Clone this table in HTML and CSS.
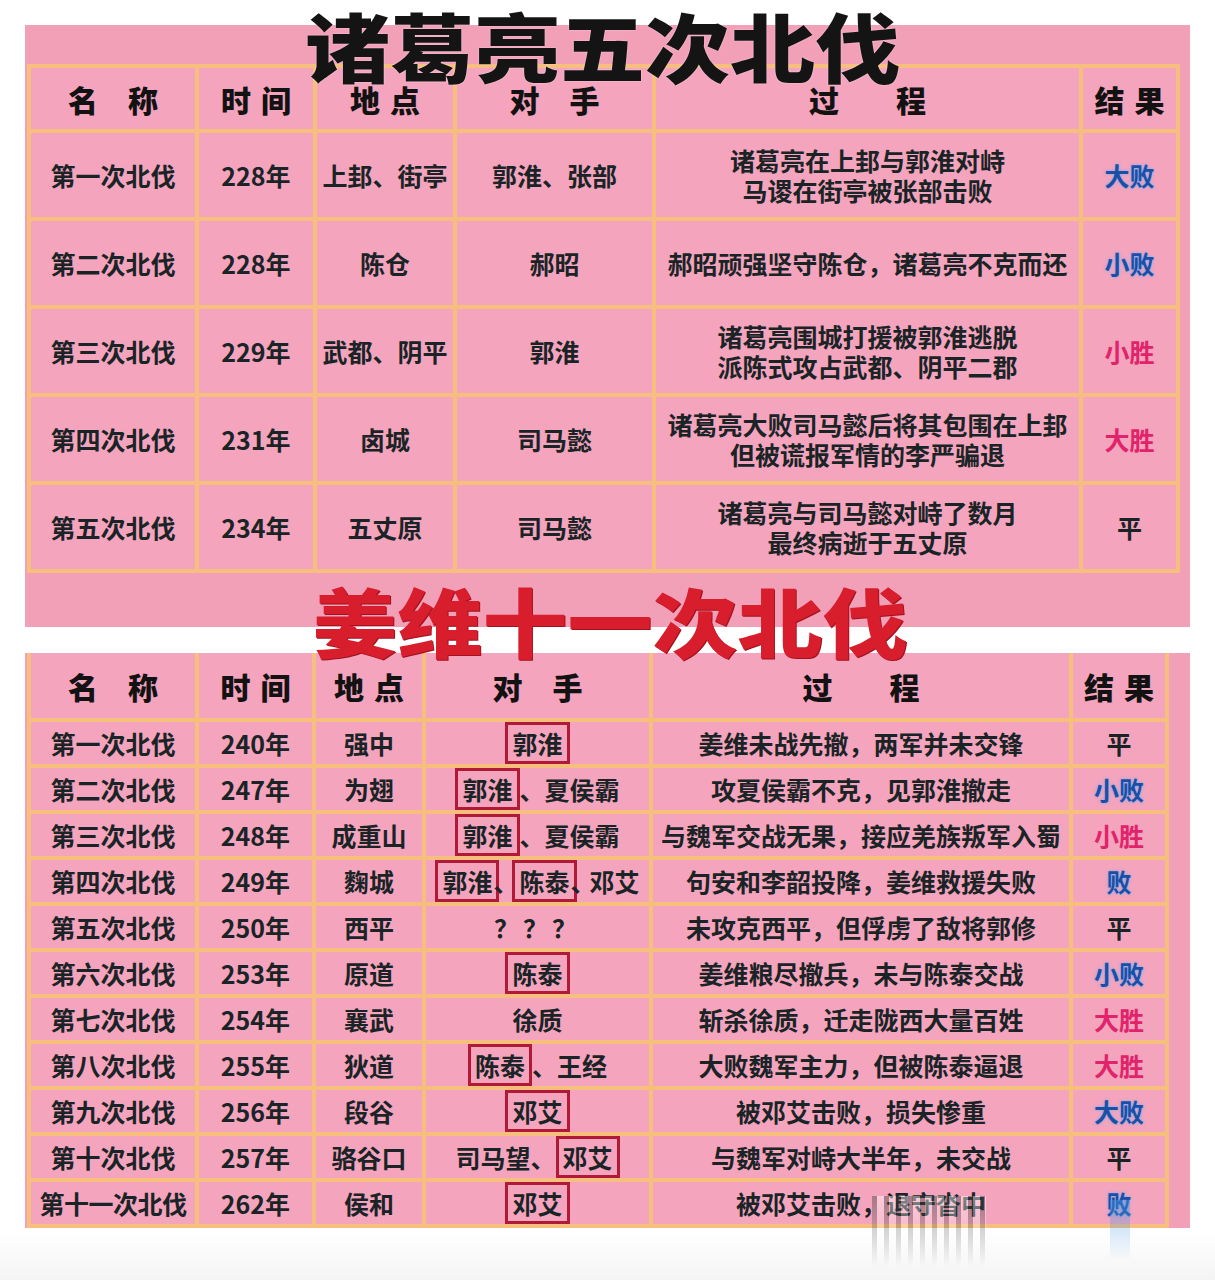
FILE: index.html
```html
<!DOCTYPE html>
<html lang="zh-CN">
<head>
<meta charset="utf-8">
<title>诸葛亮五次北伐 · 姜维十一次北伐</title>
<link rel="stylesheet" href="styles.css">
</head>
<body>
<div class="page">
  <section class="panel panel-top">
    <h1 class="title title-black">诸葛亮五次北伐</h1>
    <table class="grid t1">
      <colgroup>
        <col class="c1a"><col class="c2a"><col class="c3a"><col class="c4a"><col class="c5a"><col class="c6a">
      </colgroup>
      <thead>
        <tr>
          <th><span class="ls-wide">名称</span></th>
          <th><span class="ls-narrow">时间</span></th>
          <th><span class="ls-narrow">地点</span></th>
          <th><span class="ls-wide">对手</span></th>
          <th><span class="ls-xwide">过程</span></th>
          <th><span class="ls-narrow">结果</span></th>
        </tr>
      </thead>
      <tbody>
        <tr>
          <td>第一次北伐</td><td>228年</td><td>上邽、街亭</td><td>郭淮、张部</td>
          <td class="proc">诸葛亮在上邽与郭淮对峙<br>马谡在街亭被张部击败</td>
          <td class="res blue">大败</td>
        </tr>
        <tr>
          <td>第二次北伐</td><td>228年</td><td>陈仓</td><td>郝昭</td>
          <td class="proc">郝昭顽强坚守陈仓，诸葛亮不克而还</td>
          <td class="res blue">小败</td>
        </tr>
        <tr>
          <td>第三次北伐</td><td>229年</td><td>武都、阴平</td><td>郭淮</td>
          <td class="proc">诸葛亮围城打援被郭淮逃脱<br>派陈式攻占武都、阴平二郡</td>
          <td class="res red">小胜</td>
        </tr>
        <tr>
          <td>第四次北伐</td><td>231年</td><td>卤城</td><td>司马懿</td>
          <td class="proc">诸葛亮大败司马懿后将其包围在上邽<br>但被谎报军情的李严骗退</td>
          <td class="res red">大胜</td>
        </tr>
        <tr>
          <td>第五次北伐</td><td>234年</td><td>五丈原</td><td>司马懿</td>
          <td class="proc">诸葛亮与司马懿对峙了数月<br>最终病逝于五丈原</td>
          <td class="res">平</td>
        </tr>
      </tbody>
    </table>
  </section>

  <h2 class="title title-red">姜维十一次北伐</h2>

  <section class="panel panel-bottom">
    <table class="grid t2">
      <colgroup>
        <col class="c1b"><col class="c2b"><col class="c3b"><col class="c4b"><col class="c5b"><col class="c6b">
      </colgroup>
      <thead>
        <tr>
          <th><span class="ls-wide">名称</span></th>
          <th><span class="ls-narrow">时间</span></th>
          <th><span class="ls-narrow">地点</span></th>
          <th><span class="ls-wide">对手</span></th>
          <th><span class="ls-xwide">过程</span></th>
          <th><span class="ls-narrow">结果</span></th>
        </tr>
      </thead>
      <tbody>
        <tr>
          <td>第一次北伐</td><td>240年</td><td>强中</td>
          <td><span class="box">郭淮</span></td>
          <td>姜维未战先撤，两军并未交锋</td>
          <td class="res">平</td>
        </tr>
        <tr>
          <td>第二次北伐</td><td>247年</td><td>为翅</td>
          <td><span class="box">郭淮</span>、夏侯霸</td>
          <td>攻夏侯霸不克，见郭淮撤走</td>
          <td class="res blue">小败</td>
        </tr>
        <tr>
          <td>第三次北伐</td><td>248年</td><td>成重山</td>
          <td><span class="box">郭淮</span>、夏侯霸</td>
          <td>与魏军交战无果，接应羌族叛军入蜀</td>
          <td class="res red">小胜</td>
        </tr>
        <tr>
          <td>第四次北伐</td><td>249年</td><td>麴城</td>
          <td><span class="box">郭淮</span><span class="sep">、</span><span class="box">陈泰</span><span class="sep">、</span>邓艾</td>
          <td>句安和李韶投降，姜维救援失败</td>
          <td class="res blue">败</td>
        </tr>
        <tr>
          <td>第五次北伐</td><td>250年</td><td>西平</td>
          <td class="qq">？？？</td>
          <td>未攻克西平，但俘虏了敌将郭修</td>
          <td class="res">平</td>
        </tr>
        <tr>
          <td>第六次北伐</td><td>253年</td><td>原道</td>
          <td><span class="box">陈泰</span></td>
          <td>姜维粮尽撤兵，未与陈泰交战</td>
          <td class="res blue">小败</td>
        </tr>
        <tr>
          <td>第七次北伐</td><td>254年</td><td>襄武</td>
          <td>徐质</td>
          <td>斩杀徐质，迁走陇西大量百姓</td>
          <td class="res red">大胜</td>
        </tr>
        <tr>
          <td>第八次北伐</td><td>255年</td><td>狄道</td>
          <td><span class="box">陈泰</span>、王经</td>
          <td>大败魏军主力，但被陈泰逼退</td>
          <td class="res red">大胜</td>
        </tr>
        <tr>
          <td>第九次北伐</td><td>256年</td><td>段谷</td>
          <td><span class="box">邓艾</span></td>
          <td>被邓艾击败，损失惨重</td>
          <td class="res blue">大败</td>
        </tr>
        <tr>
          <td>第十次北伐</td><td>257年</td><td>骆谷口</td>
          <td>司马望、<span class="box">邓艾</span></td>
          <td>与魏军对峙大半年，未交战</td>
          <td class="res">平</td>
        </tr>
        <tr>
          <td class="long">第十一次北伐</td><td>262年</td><td>侯和</td>
          <td><span class="box">邓艾</span></td>
          <td>被邓艾击败，退守沓中</td>
          <td class="res blue">败</td>
        </tr>
      </tbody>
    </table>
  </section>

  <div class="watermark" aria-hidden="true"></div>
  <div class="streak" aria-hidden="true"></div>
</div>
</body>
</html>
```

FILE: styles.css
```css
html, body {
  margin: 0;
  padding: 0;
  background: #ffffff;
}

body {
  font-family: "Noto Sans CJK SC", "Noto Sans", "DejaVu Sans", sans-serif;
  color: #1a2427;
}

.page {
  position: relative;
  width: 1215px;
  height: 1280px;
  padding: 25px 25px 0;
  box-sizing: border-box;
  overflow: hidden;
  background: linear-gradient(to bottom, #ffffff 0, #ffffff 1230px, #f4f4f4 1280px);
}

.panel {
  width: 1165px;
  background: #f29fb8;
  box-sizing: border-box;
}

.panel-top {
  display: flow-root;
  padding: 0 0 54px 2px;
}

.panel-bottom {
  overflow: hidden;
  padding-left: 2px;
}

.title {
  position: relative;
  z-index: 1;
  font-size: 85px;
  line-height: 85px;
  font-weight: 900;
  text-align: center;
  letter-spacing: 0;
  transform: scaleY(0.88);
  white-space: nowrap;
}

.title-black {
  color: #141414;
  margin: -24px 0 -22px;
  padding-right: 12px;
  text-shadow: 0 0 2px rgba(255, 255, 255, 0.6);
}

.title-red {
  color: #d81e2d;
  margin: -50px 0 -9px;
  padding-left: 5px;
  text-shadow: 1px 1px 0 #a3121f;
}

/* grid tables */
.grid {
  border-collapse: separate;
  border-spacing: 4px;
  background: #f7bf7e;
  table-layout: fixed;
}

.grid th,
.grid td {
  background: #f4a4bd;
  padding: 0;
  text-align: center;
  vertical-align: middle;
  white-space: nowrap;
  font-size: 25px;
  font-weight: 600;
}

.grid th {
  font-size: 30px;
  font-weight: 900;
  color: #121212;
}

.t1 { width: 1153px; }
.t1 th { height: 61px; }
.t1 td { height: 84px; }

.c1a { width: 164px; }
.c2a { width: 114px; }
.c3a { width: 136px; }
.c4a { width: 195px; }
.c5a { width: 423px; }
.c6a { width: 93px; }

.t2 {
  width: 1142px;
  margin-top: -4px;
}
.t2 th { height: 65px; }
.t2 td { height: 42px; }

.c1b { width: 164px; }
.c2b { width: 113px; }
.c3b { width: 106px; }
.c4b { width: 223px; }
.c5b { width: 416px; }
.c6b { width: 92px; }

/* header letter spacing, trailing space removed so text stays centred */
.ls-wide { letter-spacing: 30px; margin-right: -30px; }
.ls-narrow { letter-spacing: 10px; margin-right: -10px; }
.ls-xwide { letter-spacing: 57px; margin-right: -57px; }

.proc {
  line-height: 30px;
}

.long {
  letter-spacing: -0.5px;
}

.res { font-weight: 700; }

.res.blue {
  color: #1b4fa6;
  text-shadow: 0 0 3px rgba(90, 175, 255, 0.9);
}

.res.red {
  color: #e0236a;
}

.box {
  display: inline-block;
  border: 3px solid #b01a36;
  padding: 0 4px;
  line-height: 36px;
  vertical-align: baseline;
}

.sep {
  display: inline-block;
  margin: 0 -6px;
}

.qq {
  letter-spacing: 4px;
}

/* photo watermark stripes over the bottom-right */
.watermark {
  position: absolute;
  left: 872px;
  top: 1196px;
  width: 114px;
  height: 70px;
  background: repeating-linear-gradient(90deg,
      rgba(70, 70, 70, 0.5) 0 5px,
      rgba(255, 255, 255, 0.5) 5px 12px);
  -webkit-mask-image: linear-gradient(to bottom, rgba(0,0,0,0.9), rgba(0,0,0,0));
  mask-image: linear-gradient(to bottom, rgba(0,0,0,0.9), rgba(0,0,0,0));
}

.streak {
  position: absolute;
  left: 1110px;
  top: 1200px;
  width: 20px;
  height: 60px;
  background: linear-gradient(to bottom, rgba(70, 150, 225, 0.45), rgba(70, 150, 225, 0));
}
```
